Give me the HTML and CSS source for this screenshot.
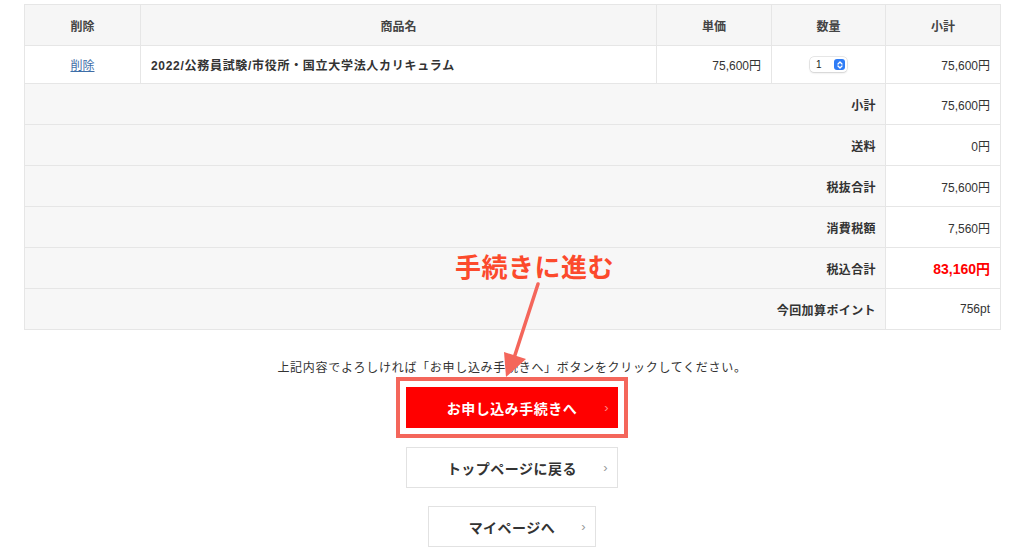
FILE: index.html
```html
<!DOCTYPE html>
<html lang="ja">
<head>
<meta charset="utf-8">
<link rel="stylesheet" href="styles.css">
</head>
<body>
<div class="page">
  <table class="cart">
    <colgroup>
      <col class="c-del"><col class="c-name"><col class="c-price"><col class="c-qty"><col class="c-sub">
    </colgroup>
    <thead>
      <tr><th>削除</th><th>商品名</th><th>単価</th><th>数量</th><th>小計</th></tr>
    </thead>
    <tbody>
      <tr class="item">
        <td class="center"><a href="#" class="del">削除</a></td>
        <td class="name">2022/公務員試験/市役所・国立大学法人カリキュラム</td>
        <td class="num">75,600円</td>
        <td class="center"><span class="select"><span class="sel-val">1</span><span class="sel-btn"><svg width="8" height="10" viewBox="0 0 8 10"><path d="M2 4 L4 2 L6 4 M2 6 L4 8 L6 6" fill="none" stroke="#fff" stroke-width="1.3" stroke-linecap="round" stroke-linejoin="round"/></svg></span></span></td>
        <td class="num">75,600円</td>
      </tr>
      <tr class="sum"><td colspan="4" class="label">小計</td><td class="num">75,600円</td></tr>
      <tr class="sum"><td colspan="4" class="label">送料</td><td class="num">0円</td></tr>
      <tr class="sum"><td colspan="4" class="label">税抜合計</td><td class="num">75,600円</td></tr>
      <tr class="sum"><td colspan="4" class="label">消費税額</td><td class="num">7,560円</td></tr>
      <tr class="sum"><td colspan="4" class="label">税込合計</td><td class="num total">83,160円</td></tr>
      <tr class="sum"><td colspan="4" class="label">今回加算ポイント</td><td class="num">756pt</td></tr>
    </tbody>
  </table>

  <div class="actions">
    <p class="notice">上記内容でよろしければ「お申し込み手続きへ」ボタンをクリックしてください。</p>
    <a href="#" class="btn btn-primary">お申し込み手続きへ<span class="chev">›</span></a>
    <a href="#" class="btn btn-top">トップページに戻る<span class="chev">›</span></a>
    <a href="#" class="btn btn-my">マイページへ<span class="chev">›</span></a>
  </div>

  <div class="annot-label">手続きに進む</div>
  <svg class="annot-arrow" width="60" height="100" viewBox="0 0 60 100">
    <line x1="46" y1="2" x2="22" y2="76" stroke="#f4665b" stroke-width="3.5" stroke-linecap="round"/>
    <polygon points="12,70 34,77 14,95" fill="#f4665b"/>
  </svg>
</div>
</body>
</html>
```

FILE: styles.css
```css
* { box-sizing: border-box; }
html, body { margin: 0; padding: 0; background: #fff; }
body {
  font-family: "Liberation Sans", "Noto Sans CJK JP", sans-serif;
  color: #333;
  font-size: 12px;
}
.page {
  position: relative;
  width: 1024px;
  height: 553px;
  padding: 4px 24px 0 24px;
  overflow: hidden;
}
.cart {
  width: 976px;
  border-collapse: collapse;
  table-layout: fixed;
}
.c-del { width: 116px; }
.c-name { width: 516px; }
.c-price { width: 115px; }
.c-qty { width: 114px; }
.c-sub { width: 115px; }
.cart th, .cart td {
  border: 1px solid #e6e6e6;
  font-size: 12px;
  padding: 0 10px;
}
.cart th {
  background: #f6f6f6;
  height: 41px;
  font-weight: bold;
  color: #444;
  text-align: center;
}
.item td { height: 38px; background: #fff; }
.center { text-align: center; }
.name { font-weight: bold; color: #333; padding-left: 8px; letter-spacing: 0.7px; }
.num { text-align: right; color: #333; }
.del { color: #3e6ea8; text-decoration: underline; }
.sum td { height: 41px; }
.sum .label {
  background: #f7f7f7;
  text-align: right;
  font-weight: bold;
  padding-right: 9px;
  letter-spacing: 0.4px;
}
.sum .num { background: #fff; }
.cart .total { color: #ff0000; font-weight: bold; font-size: 14px; }

.select {
  display: inline-flex;
  align-items: center;
  justify-content: space-between;
  width: 37px;
  height: 15px;
  padding: 0 2px 0 6px;
  background: #fff;
  border-radius: 4px;
  box-shadow: 0 0 0 0.5px #d0d0d0, 0 1px 2px rgba(0,0,0,0.15);
  vertical-align: middle;
  font-size: 10px;
}
.sel-val { line-height: 1; color: #222; }
.sel-btn {
  display: flex;
  align-items: center;
  justify-content: center;
  width: 11px;
  height: 11px;
  border-radius: 3px;
  background: #2e7cf6;
}

.actions {
  display: flex;
  flex-direction: column;
  align-items: center;
}
.notice {
  margin: 30px 0 11px 0;
  font-size: 12px;
  letter-spacing: 0.7px;
  color: #333;
  line-height: 16px;
}
.btn {
  position: relative;
  display: flex;
  align-items: center;
  justify-content: center;
  height: 41px;
  font-size: 14px;
  font-weight: bold;
  text-decoration: none;
  letter-spacing: 0.5px;
}
.chev {
  position: absolute;
  right: 9px;
  top: 50%;
  transform: translateY(-55%);
  font-size: 13px;
  font-weight: normal;
}
.btn-primary {
  width: 212px;
  background: #ff0000;
  color: #fff;
  outline: 4px solid #f4665b;
  outline-offset: 6px;
}
.btn-primary .chev { color: #ff8a8a; }
.btn-top {
  width: 212px;
  margin-top: 19px;
  height: 41px;
  background: #fff;
  border: 1px solid #e2e2e2;
  color: #333;
}
.btn-my {
  width: 168px;
  margin-top: 18px;
  background: #fff;
  border: 1px solid #e2e2e2;
  color: #333;
}
.btn-top .chev, .btn-my .chev { color: #999; }

.annot-label {
  position: absolute;
  left: 455px;
  top: 249px;
  font-size: 26px;
  font-weight: bold;
  color: #fc4a2c;
  font-family: "Noto Sans CJK JP", sans-serif;
  line-height: 34px;
  letter-spacing: 0.5px;
}
.annot-arrow {
  position: absolute;
  left: 492px;
  top: 282px;
}
```
